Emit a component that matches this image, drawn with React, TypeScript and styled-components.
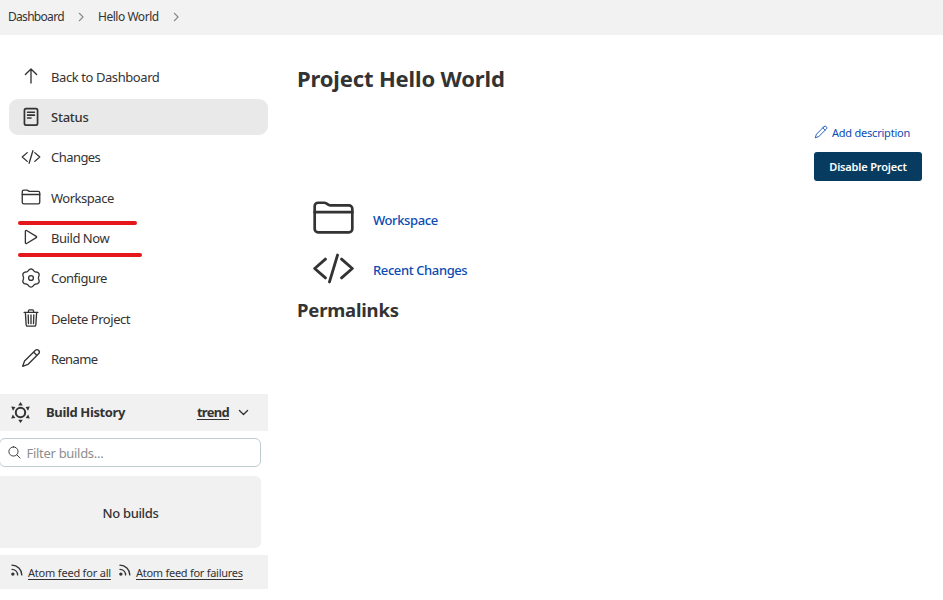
import React from "react";
import styled, { createGlobalStyle } from "styled-components";

const GlobalStyle = createGlobalStyle`
  * { box-sizing: border-box; }
  body {
    margin: 0;
    background: #fff;
    color: #333;
    font: 13px/20px "Noto Sans", "Open Sans", sans-serif;
    overflow: hidden;
  }
  h1, h2 { margin: 0; }
  a { color: inherit; text-decoration: none; }
`;

const Page = styled.div`
  height: 600px;
`;

const Breadcrumbs = styled.nav`
  display: flex;
  align-items: center;
  height: 35px;
  padding: 0 0 2px 8px;
  background: #f2f2f2;
  font-size: 12px;
`;

const Crumb = styled.a<{ $width: number; $spacing: number }>`
  flex: none;
  width: ${(p) => p.$width}px;
  letter-spacing: ${(p) => p.$spacing}px;
  white-space: nowrap;
`;

const CrumbArrow = styled.span`
  flex: none;
  width: 23px;
  color: #888;
`;

const Columns = styled.div`
  display: grid;
  grid-template-columns: 268px 1fr;
`;

const Sidebar = styled.aside`
  position: relative;
`;

const Tasks = styled.ul`
  display: grid;
  grid-auto-rows: 36px;
  gap: 4.35px;
  margin: 0;
  padding: 23.6px 0 0 9px;
  height: 359px;
  list-style: none;
`;

const Task = styled.li<{ $active?: boolean }>`
  display: grid;
  grid-template-columns: 22px 1fr;
  column-gap: 8px;
  align-items: center;
  padding-left: 12px;
  border-radius: 9px;
  background: ${(p) => (p.$active ? "#e9e9e9" : "transparent")};
  font-weight: ${(p) => (p.$active ? 500 : 400)};
`;

const TaskIcon = styled.span<{ $raised?: boolean }>`
  padding-bottom: ${(p) => (p.$raised ? 2 : 0)}px;
`;

const TaskLabel = styled.a<{ $spacing: number }>`
  letter-spacing: ${(p) => p.$spacing}px;
  white-space: nowrap;
`;

const Icon = styled.svg<{ $size: number }>`
  display: block;
  flex: none;
  width: ${(p) => p.$size}px;
  height: ${(p) => p.$size}px;
  fill: none;
  stroke: currentColor;
  stroke-linecap: round;
  stroke-linejoin: round;
  overflow: visible;
`;

const Underscore = styled.span<{ $top: number; $width: number }>`
  position: absolute;
  left: 18px;
  top: ${(p) => p.$top}px;
  width: ${(p) => p.$width}px;
  height: 4px;
  border-radius: 2px;
  background: #e4171b;
`;

const HistoryHeader = styled.header`
  display: flex;
  align-items: center;
  height: 37px;
  padding: 0 18px 0 10px;
  background: #f1f1f1;
  font-weight: 700;
`;

const HistoryTitle = styled.span`
  flex: 1;
  margin-left: 15px;
  padding-bottom: 2px;
  letter-spacing: -0.36px;
`;

const Trend = styled.a`
  margin-right: 8px;
  padding-bottom: 2px;
  letter-spacing: -0.7px;
  text-decoration: underline;
  text-underline-offset: 2px;
`;

const Search = styled.label`
  display: flex;
  align-items: center;
  gap: 4.5px;
  width: 262px;
  height: 29px;
  margin: 7px 0 9px -1px;
  padding: 0 0 0 7px;
  border: 1px solid #bfccd2;
  border-radius: 6px;
`;

const SearchInput = styled.input`
  width: 200px;
  padding: 0;
  border: 0;
  outline: 0;
  background: none;
  font: inherit;
  letter-spacing: -0.3px;
  &::placeholder { color: #8e8e8e; opacity: 1; }
`;

const Empty = styled.div`
  display: flex;
  align-items: center;
  justify-content: center;
  width: 261px;
  height: 72px;
  padding-top: 2px;
  border-radius: 0 6px 6px 0;
  background: #f1f1f1;
  font-weight: 500;
  letter-spacing: -0.35px;
`;

const Feeds = styled.footer`
  display: flex;
  height: 34px;
  margin-top: 7px;
  padding: 8px 0 0 10px;
  background: #f1f1f1;
  font-size: 11px;
`;

const Feed = styled.a<{ $width: number; $spacing: number }>`
  display: flex;
  gap: 4px;
  width: ${(p) => p.$width}px;
  letter-spacing: ${(p) => p.$spacing}px;
  white-space: nowrap;
  text-decoration: underline;
  text-underline-offset: 2px;
`;

const Main = styled.main`
  padding: 27px 21px 0 29px;
`;

const Title = styled.h1`
  height: 61px;
  font-size: 22px;
  line-height: 32px;
  letter-spacing: -0.15px;
`;

const Actions = styled.div`
  display: flex;
  flex-direction: column;
  align-items: flex-end;
  height: 69px;
`;

const AddDescription = styled.a`
  display: flex;
  align-items: center;
  gap: 4px;
  width: 108px;
  height: 20px;
  color: #0b4bb3;
  font-size: 11px;
  letter-spacing: -0.22px;
  svg { margin-bottom: 2px; }
`;

const DisableButton = styled.button`
  width: 108px;
  height: 29px;
  margin-top: 9px;
  padding: 0;
  border: 0;
  border-radius: 3px;
  background: #073c60;
  color: #fff;
  font: 600 11px "Noto Sans", sans-serif;
  letter-spacing: -0.17px;
`;

const Shortcut = styled.a<{ $height: number }>`
  display: flex;
  align-items: center;
  gap: 18px;
  height: ${(p) => p.$height}px;
  padding-left: 15px;
  color: #0b4bb3;
  font-weight: 500;
  letter-spacing: -0.4px;
  svg { color: #333; }
  span { padding-top: 4px; }
`;

const Subtitle = styled.h2`
  margin-top: 3px;
  font-size: 18.5px;
  line-height: 28px;
  letter-spacing: -0.2px;
`;

/* Six-lobed outline, lobes starting at the top. */
const gearOutline =
  Array.from({ length: 72 }, (_, i) => {
    const a = (i * Math.PI) / 36;
    const r = 211 + 21 * Math.cos(6 * a);
    return `${i ? "L" : "M"}${(256 + r * Math.sin(a)).toFixed(1)} ${(256 - r * Math.cos(a)).toFixed(1)}`;
  }).join("") + "Z";

const iconPaths: Record<string, React.ReactNode> = {
  up: <path d="M112 220 256 76l144 144M256 94v342" />,
  status: (
    <>
      <rect x="88" y="42" width="336" height="424" rx="42" strokeWidth="44" />
      <path d="M168 136h176M168 208h176M168 280h88" strokeWidth="40" />
    </>
  ),
  code: <path d="m160 368-128-112 128-112M352 368l128-112-128-112M304 96l-96 320" />,
  folder: (
    <>
      <path d="M440 432H72a40 40 0 0 1-40-40V120a40 40 0 0 1 40-40h75.89a40 40 0 0 1 22.19 6.72l27.84 18.56a40 40 0 0 0 22.19 6.72H440a40 40 0 0 1 40 40v240a40 40 0 0 1-40 40z" />
      <path d="M32 192h448" />
    </>
  ),
  play: <path d="M112 111v290c0 17.44 17 28.52 31 20.16l247.9-148.37c12.12-7.25 12.12-26.33 0-33.58L143 90.84c-14-8.36-31 2.72-31 20.16z" />,
  gear: (
    <>
      <path d={gearOutline} />
      <circle cx="256" cy="256" r="62" />
    </>
  ),
  trash: (
    <path d="m112 112 20 320c.95 18.49 14.4 32 32 32h184c17.67 0 30.87-13.51 32-32l20-320M80 112h352M192 112V72a24 24 0 0 1 24-24h80a24 24 0 0 1 24 24v40M256 176v224M184 176l8 224M328 176l-8 224" />
  ),
  pencil: (
    <path d="M364 62 91 335 43 469l134-48L450 148c24-24 26-61 4-84s-62-26-90-2zM322 104l86 86" />
  ),
  chevron: <path d="m96 176 160 160 160-160" />,
  crumb: <path d="m184 96 160 160-160 160" />,
  search: <path d="M221 64a157 157 0 1 0 157 157A157 157 0 0 0 221 64zM338 338l110 110" />,
  feed: (
    <>
      <circle cx="105" cy="405" r="38" fill="currentColor" />
      <path d="M72 230c110 0 205 88 205 205M72 80c195 0 360 160 360 355" />
    </>
  ),
};

const Glyph = ({ name, size, weight = 32 }: { name: string; size: number; weight?: number }) => (
  <Icon $size={size} viewBox="0 0 512 512" strokeWidth={weight} aria-hidden="true">
    {iconPaths[name]}
  </Icon>
);

const NotBuiltIcon = () => (
  <Icon $size={21} viewBox="0 0 21 21" strokeWidth="2" aria-hidden="true">
    <circle cx="10.5" cy="10.5" r="4.7" />
    <path
      d="m10.5 0 2.3 3.4H8.2zM10.5 21l2.3-3.2H8.2zM1.2 4.6l4.2.5-2.4 3.7zM19.8 4.6l-4.2.5 2.4 3.7zM1.2 16.6l1.6-4 2.6 3.4zM19.8 16.6l-1.6-4-2.6 3.4z"
      fill="currentColor"
      stroke="none"
    />
  </Icon>
);

const tasks = [
  { icon: "up", label: "Back to Dashboard", spacing: -0.42, raised: true },
  { icon: "status", label: "Status", spacing: -0.25, active: true },
  { icon: "code", label: "Changes", spacing: -0.55 },
  { icon: "folder", label: "Workspace", spacing: -0.48, raised: true },
  { icon: "play", label: "Build Now", spacing: -0.45, raised: true },
  { icon: "gear", label: "Configure", spacing: -0.5 },
  { icon: "trash", label: "Delete Project", spacing: -0.45, raised: true },
  { icon: "pencil", label: "Rename", spacing: -0.65, raised: true },
];

export default function App() {
  return (
    <Page>
      <GlobalStyle />
      <Breadcrumbs>
        <Crumb $width={67} $spacing={-0.7}>Dashboard</Crumb>
        <CrumbArrow><Glyph name="crumb" size={12} weight={46} /></CrumbArrow>
        <Crumb $width={72} $spacing={-0.47}>Hello World</Crumb>
        <CrumbArrow><Glyph name="crumb" size={12} weight={46} /></CrumbArrow>
      </Breadcrumbs>
      <Columns>
        <Sidebar>
          <Tasks>
            {tasks.map((t) => (
              <Task key={t.label} $active={t.active}>
                <TaskIcon $raised={t.raised}><Glyph name={t.icon} size={20} weight={34} /></TaskIcon>
                <TaskLabel href="#" $spacing={t.spacing}>{t.label}</TaskLabel>
              </Task>
            ))}
          </Tasks>
          <Underscore $top={186} $width={119} />
          <Underscore $top={218} $width={124} />
          <HistoryHeader>
            <NotBuiltIcon />
            <HistoryTitle>Build History</HistoryTitle>
            <Trend href="#">trend</Trend>
            <Glyph name="chevron" size={13} weight={52} />
          </HistoryHeader>
          <Search>
            <Glyph name="search" size={15} />
            <SearchInput placeholder="Filter builds..." />
          </Search>
          <Empty>No builds</Empty>
          <Feeds>
            <Feed href="#" $width={108} $spacing={-0.2}>
              <Glyph name="feed" size={14} weight={48} />
              Atom feed for all
            </Feed>
            <Feed href="#" $width={130} $spacing={-0.27}>
              <Glyph name="feed" size={14} weight={48} />
              Atom feed for failures
            </Feed>
          </Feeds>
        </Sidebar>
        <Main>
          <Title>Project Hello World</Title>
          <Actions>
            <AddDescription href="#">
              <Glyph name="pencil" size={14} />
              Add description
            </AddDescription>
            <DisableButton>Disable Project</DisableButton>
          </Actions>
          <Shortcut href="#" $height={51}>
            <Glyph name="folder" size={43} weight={32} />
            <span>Workspace</span>
          </Shortcut>
          <Shortcut href="#" $height={50}>
            <Glyph name="code" size={43} weight={34} />
            <span>Recent Changes</span>
          </Shortcut>
          <Subtitle>Permalinks</Subtitle>
        </Main>
      </Columns>
    </Page>
  );
}
